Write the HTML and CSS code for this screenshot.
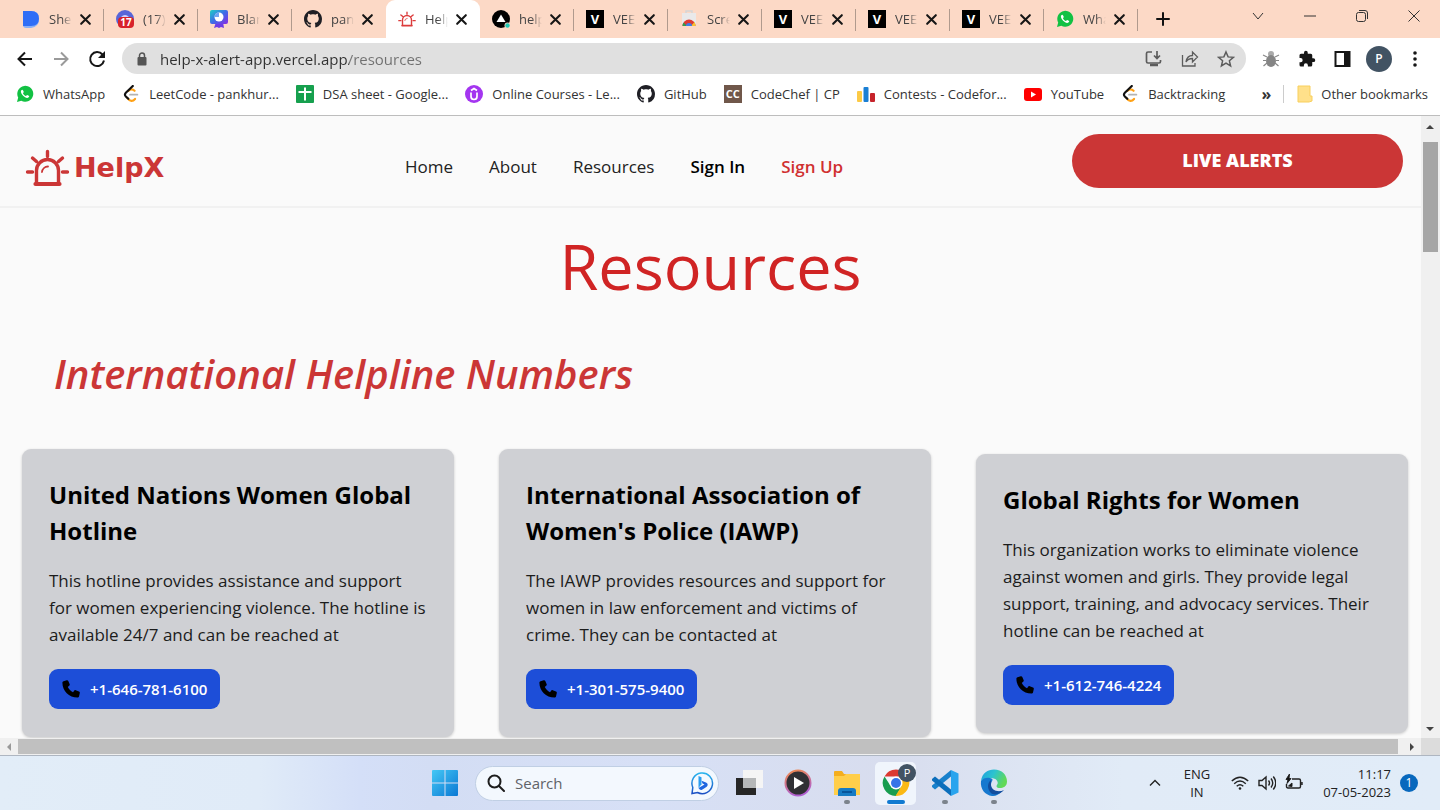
FILE: index.html
```html
<!DOCTYPE html>
<html lang="en">
<head>
<meta charset="utf-8">
<meta name="viewport" content="width=device-width, initial-scale=1">
<title>HelpX - Resources</title>
<link rel="stylesheet" href="styles.css">
</head>
<body>
<svg class="defs" aria-hidden="true">
  <defs>
    <linearGradient id="g-win" x1="0" y1="0" x2="1" y2="1"><stop offset="0" stop-color="#45c8f5"/><stop offset="1" stop-color="#0a78d4"/></linearGradient>
    <linearGradient id="g-bing" x1="0" y1="0" x2="0" y2="1"><stop offset="0" stop-color="#28b4ee"/><stop offset="1" stop-color="#1b4fc4"/></linearGradient>
    <linearGradient id="g-media" x1="0" y1="0" x2="0.3" y2="1"><stop offset="0" stop-color="#f08a4a"/><stop offset="1" stop-color="#b060d0"/></linearGradient>
    <linearGradient id="g-edge" x1="0" y1="0" x2="1" y2="0.4"><stop offset="0" stop-color="#1e9de0"/><stop offset="0.5" stop-color="#2cc3cf"/><stop offset="1" stop-color="#62d957"/></linearGradient>
    <linearGradient id="g-board" x1="0" y1="0" x2="1" y2="1"><stop offset="0" stop-color="#1fd0c4"/><stop offset="0.5" stop-color="#3d6be8"/><stop offset="1" stop-color="#8a2be2"/></linearGradient>
    <symbol id="x" viewBox="0 0 12 12"><path d="M2 2l8 8M10 2l-8 8" stroke="#161616" stroke-width="1.9" stroke-linecap="round"/></symbol>
    <symbol id="github" viewBox="0 0 16 16"><path fill="#1f1f25" d="M8 0C3.58 0 0 3.58 0 8c0 3.54 2.29 6.53 5.47 7.59.4.07.55-.17.55-.38 0-.19-.01-.82-.01-1.49-2.01.37-2.53-.49-2.69-.94-.09-.23-.48-.94-.82-1.13-.28-.15-.68-.52-.01-.53.63-.01 1.08.58 1.23.82.72 1.21 1.87.87 2.33.66.07-.52.28-.87.51-1.07-1.78-.2-3.64-.89-3.64-3.95 0-.87.31-1.59.82-2.15-.08-.2-.36-1.02.08-2.12 0 0 .67-.21 2.2.82.64-.18 1.32-.27 2-.27s1.36.09 2 .27c1.53-1.04 2.2-.82 2.2-.82.44 1.1.16 1.92.08 2.12.51.56.82 1.27.82 2.15 0 3.07-1.87 3.75-3.65 3.95.29.25.54.73.54 1.48 0 1.07-.01 1.93-.01 2.2 0 .21.15.46.55.38A8.01 8.01 0 0 0 16 8c0-4.42-3.58-8-8-8z"/></symbol>
    <symbol id="whatsapp" viewBox="0 0 18 18"><path d="M1 17l1.200-4.400A8 8 0 1 1 5.300 15.800z" fill="#12c143"/><path d="M6.200 4.700c-.5 0-1.400.7-1.300 2 .2 2.600 3.700 6 6.200 6.200 1.300 0 2.200-.8 2.100-1.600 0-.3-1.700-1.300-2.100-1.200-.4 0-.8 1-1.100 1-.9 0-3-2.100-3-2.900 0-.4.9-.8.8-1.200-.1-.5-.8-2.300-1.600-2.300z" fill="#fff"/></symbol>
    <symbol id="leet" viewBox="0 0 18 20"><path d="M6 6.500c3-2.500 5-2 7 0M5 14.500c3 4 6 4 8.500 1" fill="none" stroke="#ffa116" stroke-width="2.400" stroke-linecap="round"/><path d="M11 1L3 9c-1 1.200-1 2.200 0 3.400l3 3" fill="none" stroke="#111" stroke-width="2.400" stroke-linecap="round"/><path d="M8 10.700h8" stroke="#b3b3b3" stroke-width="2.200" stroke-linecap="round"/></symbol>
    <symbol id="siren" viewBox="0 0 44 38"><g fill="none" stroke="currentColor" stroke-width="3.400" stroke-linecap="round"><path d="M11 34V21.500a11 11 0 0 1 22 0V34M2 23h5M37 23h5M22 2.500v5M7 9l4 3.500M37 9l-4 3.500"/><path d="M10 35h24" stroke-width="4.200"/><path d="M16.500 23a6 6 0 0 1 6-5.500" stroke-width="1.800"/></g></symbol>
    <symbol id="phone" viewBox="0 0 18 18"><path d="M1.500 1.300L4.800.2c.6-.2 1.200.1 1.500.7l1.400 3.400c.2.500 0 1-.3 1.300L5.800 7c1 2.200 3 4.200 5.200 5.200l1.400-1.700c.3-.4.800-.5 1.300-.3l3.300 1.400c.7.300 1 .9.800 1.500L17 16.400c-.2.700-.8 1.200-1.500 1.200C7 17.600.4 11 .4 2.700c0-.6.500-1.200 1.100-1.400z"/></symbol>
  </defs>
</svg>

<div class="tabstrip">
  <div class="tab"><svg class="fav" viewBox="0 0 18 18"><path d="M1 1h8q8 0 8 8t-8 9H4q-3 0-3-3z" fill="#8ab0f7"/><path d="M1 1h8q8 0 8 7.500T9 16H1z" fill="#2f6ef6"/></svg><span class="tab-title">She</span><button class="tab-close" aria-label="Close tab"><svg><use href="#x"/></svg></button></div>
  <div class="tab"><svg class="fav" viewBox="0 0 18 18"><circle cx="9" cy="9" r="9" fill="#5865d8"/><path d="M5 7q4-4 8 0z" fill="#cfd4ff"/><rect x="2" y="7" width="16" height="11" rx="4" fill="#d8222a"/><text x="10" y="16" text-anchor="middle" class="t-badge">17</text></svg><span class="tab-title">(17)</span><button class="tab-close" aria-label="Close tab"><svg><use href="#x"/></svg></button></div>
  <div class="tab"><svg class="fav" viewBox="0 0 18 18"><path d="M6 12l-2 6 3-1 2 1 2-1 3 1-1-6z" fill="#6d3be6"/><rect width="18" height="14" rx="2" fill="url(#g-board)"/><circle cx="9" cy="7" r="4.500" fill="#fff"/><path d="M9 7V2.500A4.500 4.500 0 0 0 4.500 7z" fill="#6fa4f3"/></svg><span class="tab-title">Blan</span><button class="tab-close" aria-label="Close tab"><svg><use href="#x"/></svg></button></div>
  <div class="tab no-sep"><svg class="fav"><use href="#github"/></svg><span class="tab-title">pan</span><button class="tab-close" aria-label="Close tab"><svg><use href="#x"/></svg></button></div>
  <div class="tab active"><svg class="fav red"><use href="#siren"/></svg><span class="tab-title">Help</span><button class="tab-close" aria-label="Close tab"><svg><use href="#x"/></svg></button></div>
  <div class="tab"><svg class="fav" viewBox="0 0 18 18"><circle cx="9" cy="9" r="9"/><path d="M9 4.500l4.500 7.500h-9z" fill="#fff"/><circle cx="15.500" cy="15.500" r="3" fill="#fcd9c6"/><circle cx="15.500" cy="15.500" r="2.200" fill="#1fc8b4"/></svg><span class="tab-title">help</span><button class="tab-close" aria-label="Close tab"><svg><use href="#x"/></svg></button></div>
  <div class="tab"><span class="fav v-icon">V</span><span class="tab-title">VEE</span><button class="tab-close" aria-label="Close tab"><svg><use href="#x"/></svg></button></div>
  <div class="tab"><svg class="fav" viewBox="0 0 18 18"><path d="M6 3V1h6v2" fill="none" stroke="#d5d5d5" stroke-width="1.500"/><path d="M2 3h14v12H2z" fill="#e9e9ea"/><path d="M2.500 16a6.500 6.500 0 0 1 13 0z" fill="#dd3b32"/><path d="M2.500 16a6.500 6.500 0 0 1 1-3.500L7 16z" fill="#2f9e4f"/><path d="M11 16l3.500-4a6.500 6.500 0 0 1 1 4z" fill="#f9c22d"/><path d="M6 16a3 3 0 0 1 6 0z" fill="#3f7de8"/></svg><span class="tab-title">Scre</span><button class="tab-close" aria-label="Close tab"><svg><use href="#x"/></svg></button></div>
  <div class="tab"><span class="fav v-icon">V</span><span class="tab-title">VEE</span><button class="tab-close" aria-label="Close tab"><svg><use href="#x"/></svg></button></div>
  <div class="tab"><span class="fav v-icon">V</span><span class="tab-title">VEE</span><button class="tab-close" aria-label="Close tab"><svg><use href="#x"/></svg></button></div>
  <div class="tab"><span class="fav v-icon">V</span><span class="tab-title">VEE</span><button class="tab-close" aria-label="Close tab"><svg><use href="#x"/></svg></button></div>
  <div class="tab"><svg class="fav"><use href="#whatsapp"/></svg><span class="tab-title">Wha</span><button class="tab-close" aria-label="Close tab"><svg><use href="#x"/></svg></button></div>
  <button class="new-tab" aria-label="New tab"><svg width="16" height="16" viewBox="0 0 16 16"><path d="M8 2v12M2 8h12" stroke="#111" stroke-width="2" stroke-linecap="round"/></svg></button>
  <div class="window-controls">
    <button aria-label="Search tabs"><svg viewBox="0 0 14 14"><path d="M2 4l5 6 5-6"/></svg></button>
    <button aria-label="Minimize"><svg viewBox="0 0 14 14"><path d="M1 7h12"/></svg></button>
    <button aria-label="Restore"><svg viewBox="0 0 14 14"><rect x="1.500" y="3.500" width="9" height="9" rx="2"/><path d="M4 1.500h6q2.500 0 2.500 2.500v6"/></svg></button>
    <button aria-label="Close"><svg viewBox="0 0 14 14"><path d="M1.500 1.500l11 11M12.500 1.500l-11 11"/></svg></button>
  </div>
</div>

<div class="toolbar">
  <button class="tool" aria-label="Back"><svg width="18" height="18" viewBox="0 0 18 18"><path d="M16 9H3M9 2.500L2.500 9 9 15.500" stroke="#161616"/></svg></button>
  <button class="tool" aria-label="Forward"><svg width="18" height="18" viewBox="0 0 18 18"><path d="M2 9h13M9 2.500L15.500 9 9 15.500" stroke="#9a9a9a"/></svg></button>
  <button class="tool" aria-label="Reload"><svg width="18" height="18" viewBox="0 0 18 18"><path d="M14.500 4.500A7 7 0 1 0 16 10.500" stroke="#161616" stroke-width="2"/><path d="M17 1v7h-7z" fill="#161616"/></svg></button>
  <div class="omnibox">
    <svg class="lock" viewBox="0 0 10 14"><rect x="0.500" y="5" width="9" height="8.500" rx="1" fill="#555"/><path d="M2.500 6V3.500a2.500 2.500 0 0 1 5 0V6" fill="none" stroke="#555" stroke-width="1.500"/></svg>
    <input class="address" type="text" aria-label="Address" value="help-x-alert-app.vercel.app/resources">
    <button class="tool grey" aria-label="Install app"><svg width="18" height="18" viewBox="0 0 18 18"><path d="M7 2H3q-1.500 0-1.500 1.500v8Q1.500 13 3 13h11q1.500 0 1.500-1.500V10M12 1v7M9 5.500L12 8.500 15 5.500" stroke-width="1.700"/><path d="M5 15h8" stroke-width="2.500"/></svg></button>
    <button class="tool grey" aria-label="Share"><svg width="18" height="18" viewBox="0 0 18 18"><path d="M1.500 5v11h12.500v-3M5 12q1-6.500 6.500-6.500V2l5 5-5 5V8.500Q7 8.500 5 12z" stroke-width="1.300"/></svg></button>
    <button class="tool grey" aria-label="Bookmark"><svg width="18" height="18" viewBox="0 0 18 18"><path d="M9 2l2.100 4.900 5.300.4-4 3.500 1.200 5.200L9 13.200 4.400 16l1.200-5.200-4-3.500 5.300-.4z" stroke-width="1.500"/></svg></button>
  </div>
  <button class="tool" aria-label="Bug extension"><svg width="18" height="18" viewBox="0 0 18 18"><path d="M5 7L1 5M13 7l4-2M4 10.500H1M14 10.500h3M5 13l-3.500 3M13 13l3.500 3" stroke="#888" stroke-width="1.200"/><circle cx="9" cy="4" r="3" fill="#aaa"/><ellipse cx="9" cy="11" rx="5" ry="6" fill="#858585"/></svg></button>
  <button class="tool" aria-label="Extensions"><svg width="18" height="18" viewBox="0 0 24 24"><path fill="#161616" d="M20.500 11H19V7a2 2 0 0 0-2-2h-4V3.500a2.500 2.500 0 0 0-5 0V5H4a2 2 0 0 0-2 2v3.800h1.500a2.700 2.700 0 0 1 0 5.400H2V20a2 2 0 0 0 2 2h3.800v-1.500a2.700 2.700 0 0 1 5.400 0V22H17a2 2 0 0 0 2-2v-4h1.500a2.500 2.500 0 0 0 0-5z"/></svg></button>
  <button class="tool" aria-label="Side panel"><svg width="18" height="18" viewBox="0 0 18 18"><rect x="1.500" y="2" width="14" height="14" stroke="#161616" stroke-width="2"/><path d="M10 2h6v14h-6z" fill="#161616"/></svg></button>
  <button class="avatar" aria-label="Profile">P</button>
  <button class="tool" aria-label="Menu"><svg width="18" height="18" viewBox="0 0 18 18"><g fill="#161616"><circle cx="9" cy="3" r="1.800"/><circle cx="9" cy="9" r="1.800"/><circle cx="9" cy="15" r="1.800"/></g></svg></button>
</div>

<nav class="bookmarks" aria-label="Bookmarks">
  <a href="#"><svg><use href="#whatsapp"/></svg>WhatsApp</a>
  <a href="#"><svg><use href="#leet"/></svg>LeetCode - pankhur...</a>
  <a href="#"><svg viewBox="0 0 18 18"><rect width="18" height="18" rx="1" fill="#16a04e"/><path d="M2.500 7h13M9 2.500v13" stroke="#fff" stroke-width="2"/></svg>DSA sheet - Google...</a>
  <a href="#"><svg viewBox="0 0 18 18"><circle cx="9" cy="9" r="9" fill="#a435f0"/><path d="M6 7.500v4a3 3 0 0 0 6 0v-4M6 5.500L9 3.500l3 2" fill="none" stroke="#fff" stroke-width="1.700"/></svg>Online Courses - Le...</a>
  <a href="#"><svg><use href="#github"/></svg>GitHub</a>
  <a href="#"><span class="cc-icon" aria-hidden="true">CC</span>CodeChef | CP</a>
  <a href="#"><svg viewBox="0 0 18 18"><rect y="6" width="5" height="11" rx="1" fill="#fcca46"/><rect x="6.500" y="2" width="5" height="15" rx="1" fill="#1a7fd4"/><rect x="13" y="8" width="5" height="9" rx="1" fill="#c6232b"/></svg>Contests - Codefor...</a>
  <a href="#"><svg viewBox="0 0 18 18"><rect y="3" width="18" height="13" rx="3" fill="#f00"/><path d="M7 6.500v6l5-3z" fill="#fff"/></svg>YouTube</a>
  <a href="#"><svg><use href="#leet"/></svg>Backtracking</a>
  <button class="more" aria-label="More bookmarks">»</button>
  <a class="other" href="#"><svg viewBox="0 0 18 18"><path d="M2 1h12v10h2v5q-3 1-3 1H2z" fill="#ffe08a" stroke="#f8cf5c"/></svg>Other bookmarks</a>
</nav>

<div class="viewport">
  <div class="page">
    <header class="site-header">
      <a class="logo" href="#"><svg viewBox="0 0 44 38"><use href="#siren"/></svg>HelpX</a>
      <nav class="site-nav" aria-label="Main">
        <a href="#">Home</a><a href="#">About</a><a href="#">Resources</a><a class="semi" href="#">Sign In</a><a class="semi signup" href="#">Sign Up</a>
      </nav>
      <button class="live">LIVE ALERTS</button>
    </header>
    <main>
      <h1>Resources</h1>
      <h2>International Helpline Numbers</h2>
      <section class="cards">
        <article class="card">
          <h3>United Nations Women Global Hotline</h3>
          <p>This hotline provides assistance and support for women experiencing violence. The hotline is available 24/7 and can be reached at</p>
          <a class="call" href="tel:+16467816100"><svg><use href="#phone"/></svg>+1-646-781-6100</a>
        </article>
        <article class="card">
          <h3>International Association of Women's Police (IAWP)</h3>
          <p>The IAWP provides resources and support for women in law enforcement and victims of crime. They can be contacted at</p>
          <a class="call" href="tel:+13015759400"><svg><use href="#phone"/></svg>+1-301-575-9400</a>
        </article>
        <article class="card">
          <h3>Global Rights for Women</h3>
          <p>This organization works to eliminate violence against women and girls. They provide legal support, training, and advocacy services. Their hotline can be reached at</p>
          <a class="call" href="tel:+16127464224"><svg><use href="#phone"/></svg>+1-612-746-4224</a>
        </article>
      </section>
    </main>
  </div>
  <div class="vbar">
    <svg viewBox="0 0 18 18"><path d="M5 11l4-4 4 4z" fill="#444"/></svg>
    <div class="vtrack"><div class="vthumb"></div></div>
    <svg viewBox="0 0 18 18"><path d="M5 7l4 4 4-4z" fill="#444"/></svg>
  </div>
  <div class="hbar">
    <svg viewBox="0 0 18 18"><path d="M11 5L7 9l4 4z" fill="#999"/></svg>
    <div class="hthumb"></div>
    <svg viewBox="0 0 18 18"><path d="M7 5l4 4-4 4z" fill="#444"/></svg>
  </div>
  <div class="corner"></div>
</div>

<footer class="taskbar">
  <div class="apps">
    <button class="start" aria-label="Start"><svg width="26" height="26" viewBox="0 0 26 26"><path fill="url(#g-win)" d="M1 0h11.500v12.500H0V1q0-1 1-1zM13.500 0H25q1 0 1 1v11.500H13.500zM0 13.500h12.500V26H1q-1 0-1-1zM13.500 13.500H26V25q0 1-1 1H13.500z"/></svg></button>
    <label class="search">
      <svg width="18" height="18" viewBox="0 0 18 18"><circle cx="7.500" cy="7.500" r="6" fill="none" stroke="#1d1d1d" stroke-width="2"/><path d="M12 12l5 5" stroke="#1d1d1d" stroke-width="2" stroke-linecap="round"/></svg>
      <input type="text" aria-label="Search" placeholder="Search">
      <svg width="24" height="24" viewBox="0 0 24 24"><path d="M2 22.500l.8-6A10.300 10.300 0 1 1 7.500 21.500z" fill="#f4faff" stroke="url(#g-bing)" stroke-width="1.500"/><path d="M8.500 5l3 1.200v7L8.500 17z" fill="#2a9df0"/><path d="M8.500 17l3-1.800 3-1.700-2-1-1-2.700 4.500 1.700q2.500 1.200 1.300 3.500-.8 1.300-5.300 3.700-2 .8-3.500-1.700z" fill="#1f66e0"/></svg>
    </label>
    <button class="app" aria-label="Task view"><svg viewBox="0 0 28 28"><rect x="1" y="9" width="20" height="17" fill="#262626"/><rect x="8" y="1" width="20" height="18" fill="#f5f5f5"/><path d="M8 9h13v10H8z" fill="#b5b7b8"/></svg></button>
    <button class="app" aria-label="Media player"><svg viewBox="0 0 28 28"><circle cx="14" cy="14" r="12.500" fill="#303034" stroke="url(#g-media)" stroke-width="2"/><path d="M10 8v12l10-6z" fill="#fff"/></svg></button>
    <button class="app open" aria-label="File Explorer"><svg viewBox="0 0 28 28"><path d="M1 3q0-1 1-1h7l2 3h16v21H1z" fill="#f4ae1e"/><path d="M1 7h10l2-2h14v21H1z" fill="#ffce4a"/><path d="M5 27v-5q0-3 3-3h12q3 0 3 3v5z" fill="#167bc4"/><path d="M9 23h10" stroke="#07559b" stroke-width="2"/></svg></button>
    <button class="app open current" aria-label="Google Chrome"><svg viewBox="0 0 28 28"><path d="M2.500 7.500A13 13 0 0 1 25.500 7.500H14z" fill="#dc3a32"/><path d="M2.500 7.500A13 13 0 0 0 14 27l6-10-12-1z" fill="#189d50"/><path d="M25.500 7.500A13 13 0 0 1 13.500 27l6-10-3-9z" fill="#fbb914"/><circle cx="14" cy="14" r="6.500" fill="#fff"/><circle cx="14" cy="14" r="5" fill="#3674e8"/></svg><span class="app-badge">P</span></button>
    <button class="app open" aria-label="Visual Studio Code"><svg viewBox="0 0 28 28"><path d="M20 1v6.500L4 20.500 1 18v-1.500z" fill="#1880cc"/><path d="M1 11.500V10l3-2.500 16 13V27z" fill="#0c6ebb"/><path d="M20 1l7.500 3.500v19L20 27z" fill="#29a4ee"/></svg></button>
    <button class="app open" aria-label="Microsoft Edge"><svg viewBox="0 0 28 28"><path d="M1 12C2 4 8 .5 14 .5c8 0 13 5.500 13 12 0 5-4 6.500-7 6.500-4 0-4-2-2.500-4 1-2-1-6-6.500-6-4 0-8 1-10 3z" fill="url(#g-edge)"/><path d="M1 12c2-3 6-4 9-3 5 1 1 3 1 7 0 5 5 8 11 6-3 4-7 5.500-10 5C5 26 0 20 1 12z" fill="#1678cf"/><path d="M11 11c-4 3-4 9 0 13 3 3 10 1 13-3-6 3-13 0-13-5z" fill="#124d9e"/></svg></button>
  </div>
  <div class="tray">
    <button aria-label="Show hidden icons"><svg width="14" height="14" viewBox="0 0 14 14"><path d="M2 9.500l5-5 5 5"/></svg></button>
    <span class="lang">ENG<br>IN</span>
    <span class="status">
      <svg width="18" height="18" viewBox="0 0 18 18"><path d="M.8 7q8.200-7.500 16.400 0M3.200 9.700q5.800-5.400 11.600 0M5.700 12.300q3.300-3 6.600 0"/><circle cx="9" cy="14.500" r="1.300" fill="#222" stroke="none"/></svg>
      <svg width="18" height="18" viewBox="0 0 18 18"><path d="M1 6.500h3L8 3v12l-4-3.500H1zM10.500 6.500q2 2.500 0 5M13 4.500q3.500 4.500 0 9M15.300 2.500q5 6.500 0 13"/></svg>
      <svg width="18" height="18" viewBox="0 0 18 18"><path d="M7 5h7q1.500 0 1.500 1.500v6Q15.500 14 14 14H3q-1.500 0-1.500-1.500V10M17 8v3"/><path d="M4.500 0L1 5.500h2L2 9.500 6 4.500H4zM3.500 12l3.500-3v3.500z" fill="#111" stroke-width="1"/></svg>
    </span>
    <span class="clock">11:17<br>07-05-2023</span>
    <span class="notice">1</span>
  </div>
</footer>
</body>
</html>
```
FILE: styles.css
```css
* { box-sizing: border-box; }
body {
  margin: 0;
  height: 100vh;
  display: flex;
  flex-direction: column;
  overflow: hidden;
  font-family: "Open Sans", "Noto Sans", sans-serif;
  font-size: 13px;
  color: #222;
  background: #fff;
}
button, input { font: inherit; color: inherit; border: 0; background: none; padding: 0; margin: 0; outline: 0; }
a { color: inherit; text-decoration: none; }
h1, h2, h3, p { margin: 0; }
svg { display: block; flex: none; }
.defs { position: absolute; width: 0; height: 0; }

/* tab strip */
.tabstrip { display: flex; height: 38px; padding-left: 10px; background: #fcd9c6; }
.tab { flex: 0 1 94px; min-width: 0; display: flex; align-items: center; padding: 0 12px; position: relative; }
.tab::after { content: ""; position: absolute; right: 0; top: 9px; width: 1px; height: 22px; background: #b09a8d; }
.tab.no-sep::after, .tab.active::after { display: none; }
.tab.active { background: #fff; border-radius: 9px 9px 0 0; }
.fav { width: 18px; height: 18px; flex: none; }
.fav.red { color: #dc3c3c; }
.v-icon { background: #000; color: #fff; font-weight: 700; font-size: 13px; line-height: 18px; text-align: center; }
.t-badge { font-weight: 700; font-size: 10px; fill: #fff; }
.tab-title { width: 24px; margin-left: 9px; overflow: hidden; white-space: nowrap; color: #444; -webkit-mask-image: linear-gradient(90deg, #000 55%, transparent); mask-image: linear-gradient(90deg, #000 55%, transparent); }
.tab-close { margin-left: 7px; }
.tab-close svg { width: 13px; height: 13px; }
.new-tab { width: 50px; display: grid; place-items: center; }
.window-controls { margin-left: auto; display: flex; height: 32px; }
.window-controls button { width: 52px; display: grid; place-items: center; }
.window-controls svg { width: 14px; height: 14px; fill: none; stroke: #333; stroke-width: 1; }

/* toolbar */
.toolbar { display: flex; align-items: center; height: 41px; padding: 0 16px; gap: 18px; }
.tool { width: 18px; height: 18px; }
.tool svg { fill: none; stroke-width: 2; }
.tool.grey svg { stroke: #5c5c5c; }
.omnibox { flex: 1; min-width: 0; display: flex; align-items: center; gap: 18px; height: 31px; margin: 0 -2px; padding: 0 11px 0 15px; border-radius: 16px; background: #e0e0e0; }
.lock { width: 10px; height: 14px; }
.address {
  flex: 1;
  min-width: 0;
  margin-left: -5px;
  font-size: 15px;
  color: transparent;
  background: linear-gradient(90deg, #303030 189px, #707070 189px);
  -webkit-background-clip: text;
  background-clip: text;
}
.avatar { width: 26px; height: 26px; margin: 0 -4px; border-radius: 50%; background: #425363; color: #fff; font-size: 12px; font-weight: 600; }

/* bookmarks */
.bookmarks { display: flex; align-items: center; height: 37px; padding: 0 12px 6px 16px; gap: 17px; border-bottom: 1px solid #bdbdbd; color: #333; white-space: nowrap; }
.bookmarks a { display: flex; align-items: center; gap: 9px; }
.bookmarks svg, .cc-icon { width: 18px; height: 18px; }
.cc-icon { background: #70574a; color: #fff; font-size: 11px; font-weight: 700; line-height: 18px; text-align: center; }
.more { margin-left: auto; font-size: 16px; font-weight: 700; }
.bookmarks .other { margin-left: -5px; padding-left: 12px; gap: 7px; border-left: 1px solid #ccc; }

/* page viewport with its scrollbars */
.viewport { flex: 1; min-height: 0; display: grid; grid-template: minmax(0, 1fr) 18px / minmax(0, 1fr) 19px; }
.page { overflow: hidden; background: #fafafa; }
.vbar { display: flex; flex-direction: column; background: #f0f0f0; padding-top: 2px; }
.vbar svg { width: 18px; height: 18px; }
.vtrack { flex: 1; padding: 6px 2px 0; }
.vthumb { height: 110px; background: #a6a6a6; }
.hbar { display: flex; align-items: center; background: #f0f0f0; border-bottom: 1px solid #aeb6c1; }
.hbar svg { width: 18px; height: 18px; }
.hthumb { flex: 1; height: 15px; margin-right: 5px; background: #c0c0c0; }
.corner { background: #dcdcdc; border-bottom: 1px solid #aeb6c1; }

/* site header */
.site-header { display: grid; grid-template-columns: 380px 1fr 331px; align-items: start; height: 92px; padding: 18px 18px 0 25px; border-bottom: 2px solid #f1f1f1; }
.logo { display: flex; align-items: center; gap: 4px; margin-top: 12px; color: #cb3636; font: 700 27px/44px "DejaVu Sans", sans-serif; }
.logo svg { width: 45px; height: 38px; }
.site-nav { display: flex; gap: 36px; margin-top: 19px; font-size: 17px; line-height: 27px; white-space: nowrap; }
.semi { font-weight: 600; color: #000; }
.signup { color: #d03030; }
.live { height: 54px; padding-bottom: 2px; border-radius: 27px; background: #cb3636; color: #fff; font-size: 18px; font-weight: 800; }

/* resources */
h1 { margin-top: 16px; text-align: center; font-size: 63px; line-height: 84px; font-weight: 400; color: #d02424; }
h2 { margin: 36px 0 0 54px; font-size: 40px; line-height: 60px; font-style: italic; font-weight: 600; color: #cb3636; }
.cards { display: grid; grid-template-columns: repeat(3, minmax(0, 1fr)); align-items: center; gap: 45px; padding: 45px 13px 27px 22px; }
.card { padding: 28px 27px; border-radius: 9px; background: #cfd0d4; box-shadow: 0 1px 3px rgba(0, 0, 0, 0.2); }
.card h3 { font-size: 24px; line-height: 36px; font-weight: 700; color: #000; }
.card p { margin: 18px 0 21px; font-size: 17px; line-height: 27px; color: #1c1c1c; }
.call { display: inline-flex; align-items: center; gap: 10px; height: 40px; padding: 0 13px; border-radius: 9px; background: #1d4ed8; color: #fff; font-size: 15px; font-weight: 600; vertical-align: top; }
.call svg { width: 18px; height: 18px; fill: #000; color: #000; }

/* taskbar */
.taskbar { display: grid; grid-template-columns: 1fr auto 1fr; height: 54px; padding-left: 2px; background: linear-gradient(90deg, #e2edf8 0, #e0ebf8 18%, #d4dff8 25%, #d3ddf4 30%, #d7e0f6 45%, #d8ddee 62%, #e1ebf7 78%, #e1ecf8 100%); }
.apps { grid-column: 2; display: flex; align-items: center; }
.start { width: 42px; height: 42px; display: grid; place-items: center; margin-right: 9px; }
.search { display: flex; align-items: center; width: 244px; height: 35px; gap: 10px; padding: 0 4px 0 11px; margin-right: 5px; border: 1px solid #c0cfe4; border-radius: 18px; background: #f3f8fe; }
.search input { flex: 1; min-width: 0; font-size: 15px; }
.search input::placeholder { color: #5f6368; opacity: 1; }
.app { position: relative; width: 41px; height: 43px; margin: 0 4px; display: grid; place-items: center; border-radius: 5px; }
.app svg { width: 28px; height: 28px; }
.app.open::after { content: ""; position: absolute; bottom: 1px; left: 50%; margin-left: -3px; width: 6px; height: 4px; border-radius: 2px; background: #7c838c; }
.app.current { background: #f0f5fc; }
.app.current::after { width: 18px; margin-left: -9px; background: #117ad1; }
.app-badge { position: absolute; top: 2px; right: 0; width: 18px; height: 18px; border-radius: 50%; background: #425363; color: #fff; font-size: 11px; line-height: 18px; }
.tray { grid-column: 3; display: flex; align-items: center; justify-content: flex-end; padding-right: 22px; line-height: 18px; text-align: center; }
.tray svg { fill: none; stroke: #222; stroke-width: 1.4; }
.lang { margin-left: 22px; }
.status { display: flex; gap: 9px; margin: 0 20px 0 21px; }
.clock { text-align: right; }
.notice { width: 18px; height: 18px; margin-left: 9px; border-radius: 50%; background: #0868bd; color: #fff; font-size: 12px; }
```
